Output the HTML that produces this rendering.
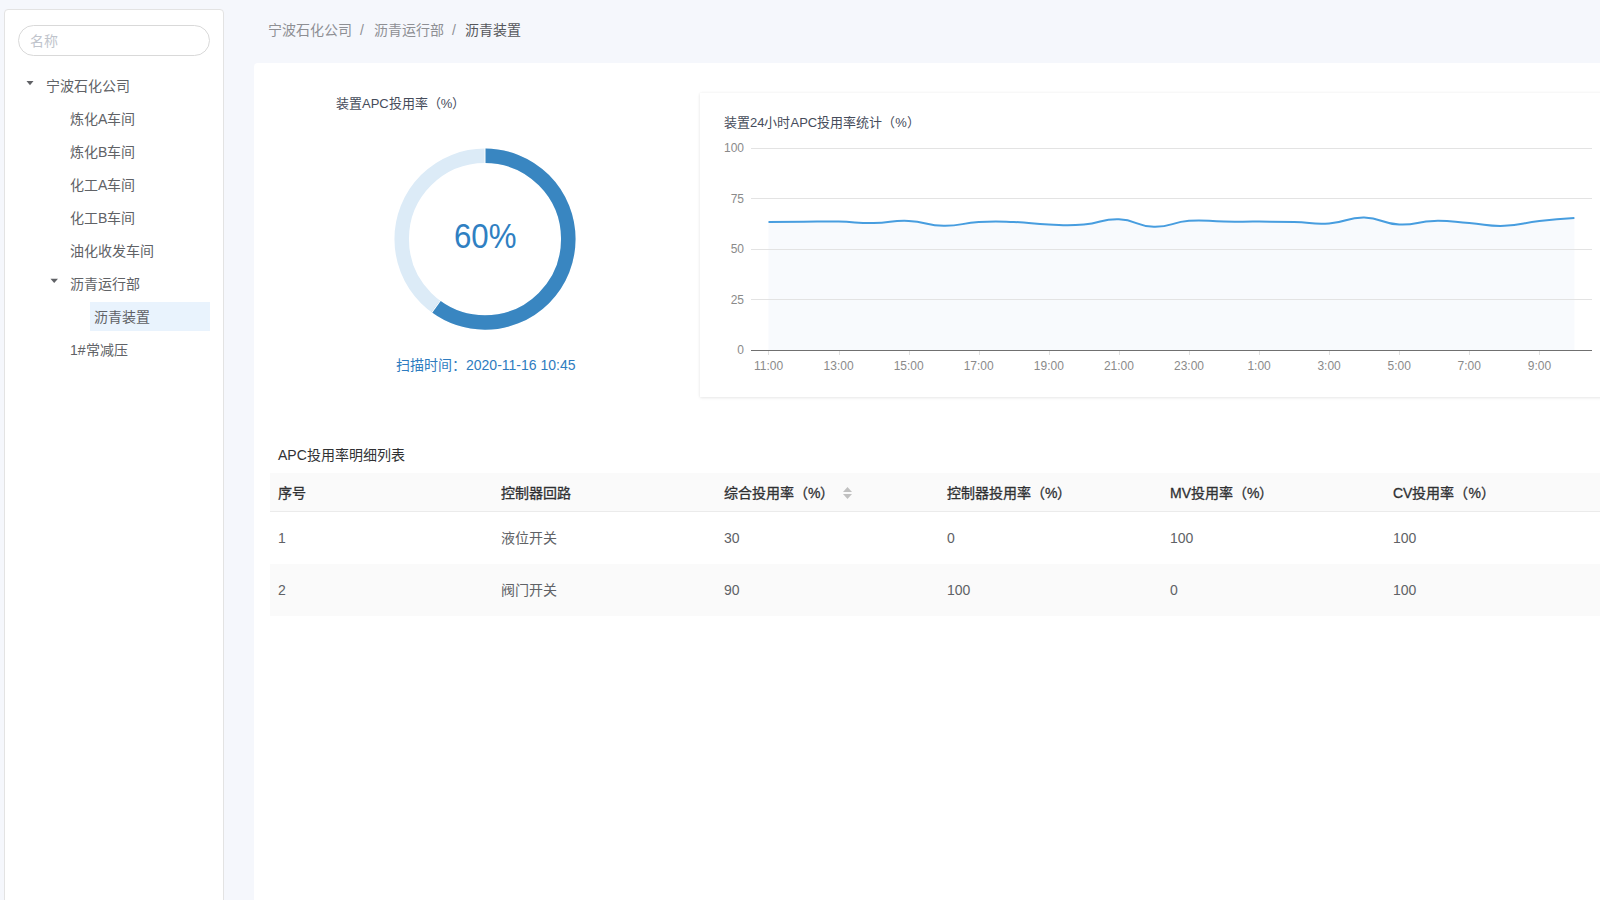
<!DOCTYPE html>
<html lang="zh-CN">
<head>
<meta charset="utf-8">
<title>APC</title>
<style>
*{box-sizing:border-box;margin:0;padding:0}
html,body{width:1600px;height:900px;overflow:hidden}
body{background:#f5f7fc;font-family:"Liberation Sans",sans-serif;font-size:14px;color:#606266;position:relative}
.abs{position:absolute;white-space:nowrap;line-height:16px}
#side{position:absolute;left:4px;top:9px;width:220px;height:1000px;background:#fff;border:1px solid #e3e3e3;border-radius:4px}
#search{position:absolute;left:18px;top:25px;width:192px;height:31px;border:1px solid #d9d9d9;border-radius:16px;background:#fff}
.ph{color:#c0c4cc;font-size:14px}
.tree{color:#606266;font-size:14px}
.tri{position:absolute;width:0;height:0;border-left:3.5px solid transparent;border-right:3.5px solid transparent;border-top:4.5px solid #606266}
#hl{position:absolute;left:90px;top:302px;width:120px;height:29px;background:#e9f3fd}
.bc{color:#8e8f94;font-size:14px}
.bcl{color:#55575c;font-size:14px}
#card{position:absolute;left:254px;top:63px;width:1400px;height:900px;background:#fff;border-radius:4px}
.ttl{color:#464c5b;font-size:13px}
#chartcard{position:absolute;left:700px;top:93px;width:1000px;height:304px;box-shadow:0 1px 3px rgba(0,0,0,0.08),0 0 3px rgba(0,0,0,0.05);border-radius:0;background:#fff}
.ax{color:#8a8a8a;font-size:12px}
.th{color:#303133;font-size:14px;-webkit-text-stroke:0.3px #303133}
.td{color:#606266;font-size:14px}
</style>
</head>
<body>
<div id="side"></div>
<div id="search"></div>
<div class="abs ph" style="left:30px;top:33px">名称</div>

<svg style="position:absolute;left:24px;top:78px" width="12" height="10"><path d="M2.5 3 L9.5 3 L6 7.2 Z" fill="#606266"/></svg>
<div class="abs tree" style="left:46px;top:78px">宁波石化公司</div>
<div class="abs tree" style="left:70px;top:111px">炼化A车间</div>
<div class="abs tree" style="left:70px;top:144px">炼化B车间</div>
<div class="abs tree" style="left:70px;top:177px">化工A车间</div>
<div class="abs tree" style="left:70px;top:210px">化工B车间</div>
<div class="abs tree" style="left:70px;top:243px">油化收发车间</div>
<svg style="position:absolute;left:48px;top:276px" width="12" height="10"><path d="M2.5 2.8 L10 2.8 L6.2 7 Z" fill="#606266"/></svg>
<div class="abs tree" style="left:70px;top:276px">沥青运行部</div>
<div id="hl"></div>
<div class="abs tree" style="left:94px;top:309px">沥青装置</div>
<div class="abs tree" style="left:70px;top:342px">1#常减压</div>

<div class="abs bc" style="left:268px;top:22px">宁波石化公司</div>
<div class="abs bc" style="left:360px;top:22px">/</div>
<div class="abs bc" style="left:374px;top:22px">沥青运行部</div>
<div class="abs bc" style="left:452px;top:22px">/</div>
<div class="abs bcl" style="left:465px;top:22px">沥青装置</div>

<div id="card"></div>
<div class="abs ttl" style="left:336px;top:96px">装置APC投用率（%）</div>
<svg style="position:absolute;left:385px;top:139px" width="200" height="200" viewBox="0 0 200 200">
  <circle cx="100" cy="100.1" r="83.3" fill="none" stroke="#dcebf7" stroke-width="14.5"/>
  <circle cx="100" cy="100.1" r="83.3" fill="none" stroke="#3986c1" stroke-width="14.5"
    stroke-dasharray="314.0 1000" transform="rotate(-90 100 100.1)"/>
  <line x1="100" y1="8" x2="100" y2="24" stroke="#fff" stroke-width="1"/>
  <line x1="56.5" y1="160" x2="45.3" y2="175.3" stroke="#fff" stroke-width="1.2"/>
</svg>
<div class="abs" style="left:454px;top:217px;font-size:35.5px;line-height:38px;color:#2f80c2;transform:scaleX(0.88);transform-origin:0 0">60%</div>
<div class="abs" style="left:396px;top:357px;font-size:14px;color:#2e7cc0">扫描时间：2020-11-16 10:45</div>

<div id="chartcard"></div>
<div class="abs ttl" style="left:724px;top:115px">装置24小时APC投用率统计（%）</div>
<svg id="chart" style="position:absolute;left:700px;top:130px" width="900" height="250" viewBox="700 130 900 250">
<path d="M768.5 222.00 C768.5 222.00 786.0 221.80 803.5 221.70 C821.1 221.60 821.1 221.28 838.6 221.60 C856.1 221.93 856.1 223.17 873.6 223.00 C891.1 222.82 891.2 220.19 908.7 220.90 C926.3 221.62 926.1 225.57 943.7 225.85 C961.2 226.12 961.2 222.97 978.7 222.00 C996.2 221.04 996.3 221.38 1013.8 222.00 C1031.3 222.63 1031.3 223.87 1048.8 224.50 C1066.3 225.12 1066.4 225.81 1083.9 224.50 C1101.5 223.18 1101.5 218.68 1118.9 219.25 C1136.5 219.83 1136.3 226.41 1153.9 226.80 C1171.4 227.19 1171.3 222.11 1189.0 220.80 C1206.4 219.51 1206.5 221.40 1224.0 221.60 C1241.5 221.80 1241.5 221.50 1259.1 221.60 C1276.6 221.70 1276.6 221.55 1294.1 222.00 C1311.6 222.45 1311.7 224.49 1329.1 223.40 C1346.8 222.29 1346.7 217.33 1364.2 217.60 C1381.7 217.88 1381.6 223.67 1399.2 224.50 C1416.6 225.32 1416.7 221.25 1434.3 220.90 C1451.8 220.55 1451.8 221.86 1469.3 223.10 C1486.8 224.34 1486.9 226.40 1504.3 225.85 C1521.9 225.30 1521.8 222.89 1539.4 220.90 C1556.8 218.92 1574.4 217.90 1574.4 217.90 L1574.4 350 L768.5 350 Z" fill="#f8fafd"/>
<line x1="751" y1="148.5" x2="1592" y2="148.5" stroke="#e3e3e3" stroke-width="1"/>
<line x1="751" y1="198.5" x2="1592" y2="198.5" stroke="#e3e3e3" stroke-width="1"/>
<line x1="751" y1="249.5" x2="1592" y2="249.5" stroke="#e3e3e3" stroke-width="1"/>
<line x1="751" y1="299.5" x2="1592" y2="299.5" stroke="#e3e3e3" stroke-width="1"/>
<line x1="751" y1="350.5" x2="1592" y2="350.5" stroke="#707070" stroke-width="1"/>
<line x1="768.5" y1="351" x2="768.5" y2="355" stroke="#e0e0e0" stroke-width="1"/>
<line x1="839.5" y1="351" x2="839.5" y2="355" stroke="#e0e0e0" stroke-width="1"/>
<line x1="909.5" y1="351" x2="909.5" y2="355" stroke="#e0e0e0" stroke-width="1"/>
<line x1="979.5" y1="351" x2="979.5" y2="355" stroke="#e0e0e0" stroke-width="1"/>
<line x1="1049.5" y1="351" x2="1049.5" y2="355" stroke="#e0e0e0" stroke-width="1"/>
<line x1="1119.5" y1="351" x2="1119.5" y2="355" stroke="#e0e0e0" stroke-width="1"/>
<line x1="1189.5" y1="351" x2="1189.5" y2="355" stroke="#e0e0e0" stroke-width="1"/>
<line x1="1259.5" y1="351" x2="1259.5" y2="355" stroke="#e0e0e0" stroke-width="1"/>
<line x1="1329.5" y1="351" x2="1329.5" y2="355" stroke="#e0e0e0" stroke-width="1"/>
<line x1="1399.5" y1="351" x2="1399.5" y2="355" stroke="#e0e0e0" stroke-width="1"/>
<line x1="1469.5" y1="351" x2="1469.5" y2="355" stroke="#e0e0e0" stroke-width="1"/>
<line x1="1539.5" y1="351" x2="1539.5" y2="355" stroke="#e0e0e0" stroke-width="1"/>
<path d="M768.5 222.00 C768.5 222.00 786.0 221.80 803.5 221.70 C821.1 221.60 821.1 221.28 838.6 221.60 C856.1 221.93 856.1 223.17 873.6 223.00 C891.1 222.82 891.2 220.19 908.7 220.90 C926.3 221.62 926.1 225.57 943.7 225.85 C961.2 226.12 961.2 222.97 978.7 222.00 C996.2 221.04 996.3 221.38 1013.8 222.00 C1031.3 222.63 1031.3 223.87 1048.8 224.50 C1066.3 225.12 1066.4 225.81 1083.9 224.50 C1101.5 223.18 1101.5 218.68 1118.9 219.25 C1136.5 219.83 1136.3 226.41 1153.9 226.80 C1171.4 227.19 1171.3 222.11 1189.0 220.80 C1206.4 219.51 1206.5 221.40 1224.0 221.60 C1241.5 221.80 1241.5 221.50 1259.1 221.60 C1276.6 221.70 1276.6 221.55 1294.1 222.00 C1311.6 222.45 1311.7 224.49 1329.1 223.40 C1346.8 222.29 1346.7 217.33 1364.2 217.60 C1381.7 217.88 1381.6 223.67 1399.2 224.50 C1416.6 225.32 1416.7 221.25 1434.3 220.90 C1451.8 220.55 1451.8 221.86 1469.3 223.10 C1486.8 224.34 1486.9 226.40 1504.3 225.85 C1521.9 225.30 1521.8 222.89 1539.4 220.90 C1556.8 218.92 1574.4 217.90 1574.4 217.90" fill="none" stroke="#479ddf" stroke-width="2" stroke-linejoin="round"/>
</svg>
<div class="abs ax" style="left:768.5px;top:358px;width:60px;margin-left:-30px;text-align:center">11:00</div>
<div class="abs ax" style="left:838.6px;top:358px;width:60px;margin-left:-30px;text-align:center">13:00</div>
<div class="abs ax" style="left:908.7px;top:358px;width:60px;margin-left:-30px;text-align:center">15:00</div>
<div class="abs ax" style="left:978.7px;top:358px;width:60px;margin-left:-30px;text-align:center">17:00</div>
<div class="abs ax" style="left:1048.8px;top:358px;width:60px;margin-left:-30px;text-align:center">19:00</div>
<div class="abs ax" style="left:1118.9px;top:358px;width:60px;margin-left:-30px;text-align:center">21:00</div>
<div class="abs ax" style="left:1189.0px;top:358px;width:60px;margin-left:-30px;text-align:center">23:00</div>
<div class="abs ax" style="left:1259.1px;top:358px;width:60px;margin-left:-30px;text-align:center">1:00</div>
<div class="abs ax" style="left:1329.1px;top:358px;width:60px;margin-left:-30px;text-align:center">3:00</div>
<div class="abs ax" style="left:1399.2px;top:358px;width:60px;margin-left:-30px;text-align:center">5:00</div>
<div class="abs ax" style="left:1469.3px;top:358px;width:60px;margin-left:-30px;text-align:center">7:00</div>
<div class="abs ax" style="left:1539.4px;top:358px;width:60px;margin-left:-30px;text-align:center">9:00</div>
<div class="abs ax" style="left:684px;top:140.0px;width:60px;text-align:right">100</div>
<div class="abs ax" style="left:684px;top:190.6px;width:60px;text-align:right">75</div>
<div class="abs ax" style="left:684px;top:241.2px;width:60px;text-align:right">50</div>
<div class="abs ax" style="left:684px;top:291.8px;width:60px;text-align:right">25</div>
<div class="abs ax" style="left:684px;top:342.4px;width:60px;text-align:right">0</div>

<div class="abs" style="left:278px;top:447px;font-size:14px;color:#303133">APC投用率明细列表</div>
<div style="position:absolute;left:270px;top:473px;width:1400px;height:39px;background:#fafafa;border-bottom:1px solid #ebebeb"></div>
<div style="position:absolute;left:270px;top:564px;width:1400px;height:52px;background:#fafafa"></div>
<div class="abs th" style="left:278px;top:485px">序号</div>
<div class="abs th" style="left:501px;top:485px">控制器回路</div>
<div class="abs th" style="left:724px;top:485px">综合投用率（%）</div>
<div class="abs th" style="left:947px;top:485px">控制器投用率（%）</div>
<div class="abs th" style="left:1170px;top:485px">MV投用率（%）</div>
<div class="abs th" style="left:1393px;top:485px">CV投用率（%）</div>
<svg style="position:absolute;left:842px;top:486px" width="10" height="14" viewBox="0 0 10 14"><path d="M1 6 L5.5 1 L10 6 Z" fill="#c0c0c0"/><path d="M1 8 L5.5 13 L10 8 Z" fill="#c0c0c0"/></svg>
<div class="abs td" style="left:278px;top:530px">1</div>
<div class="abs td" style="left:501px;top:530px">液位开关</div>
<div class="abs td" style="left:724px;top:530px">30</div>
<div class="abs td" style="left:947px;top:530px">0</div>
<div class="abs td" style="left:1170px;top:530px">100</div>
<div class="abs td" style="left:1393px;top:530px">100</div>
<div class="abs td" style="left:278px;top:582px">2</div>
<div class="abs td" style="left:501px;top:582px">阀门开关</div>
<div class="abs td" style="left:724px;top:582px">90</div>
<div class="abs td" style="left:947px;top:582px">100</div>
<div class="abs td" style="left:1170px;top:582px">0</div>
<div class="abs td" style="left:1393px;top:582px">100</div>
</body>
</html>
